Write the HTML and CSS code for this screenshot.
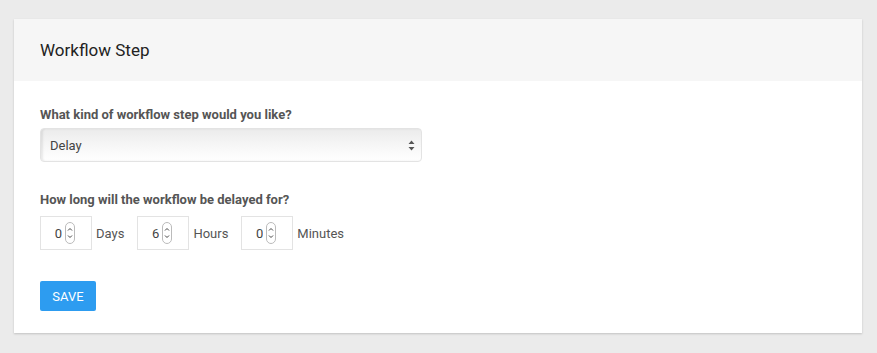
FILE: index.html
```html
<!DOCTYPE html>
<html lang="en">
<head>
    <meta charset="UTF-8">
    <meta name="viewport" content="width=device-width, initial-scale=1.0">
    <title>Workflow Step</title>
    <link rel="stylesheet" href="styles.css">
</head>
<body>

    <div class="card">
        <div class="card-head">
            <h2>Workflow Step</h2>
        </div>
        <form class="card-body">
            <label class="field-label">What kind of workflow step would you like?</label>
            <div class="select-wrap">
                <select name="kind">
                    <option value="delay">Delay</option>
                    <option value="email">Email</option>
                </select>
                <svg class="select-arrows" width="7" height="11" viewBox="0 0 7 11">
                    <path d="M3.5 0.5 L6.5 4 L0.5 4 Z M3.5 10.5 L6.5 7 L0.5 7 Z" fill="#555"/>
                </svg>
            </div>

            <label class="field-label second">How long will the workflow be delayed for?</label>
            <div class="delay-row">
                <div class="num-box">
                    <input type="text" name="days" value="0">
                    <svg class="spin" width="10" height="22" viewBox="0 0 10 22">
                        <rect x="0.5" y="0.5" width="9" height="21" rx="4.5" fill="#fff" stroke="#bbb"/>
                        <path d="M3 8.5 L5 6.5 L7 8.5 M3 13.5 L5 15.5 L7 13.5" fill="none" stroke="#444" stroke-width="1"/>
                    </svg>
                </div>
                <span class="unit">Days</span>
                <div class="num-box">
                    <input type="text" name="hours" value="6">
                    <svg class="spin" width="10" height="22" viewBox="0 0 10 22">
                        <rect x="0.5" y="0.5" width="9" height="21" rx="4.5" fill="#fff" stroke="#bbb"/>
                        <path d="M3 8.5 L5 6.5 L7 8.5 M3 13.5 L5 15.5 L7 13.5" fill="none" stroke="#444" stroke-width="1"/>
                    </svg>
                </div>
                <span class="unit">Hours</span>
                <div class="num-box">
                    <input type="text" name="minutes" value="0">
                    <svg class="spin" width="10" height="22" viewBox="0 0 10 22">
                        <rect x="0.5" y="0.5" width="9" height="21" rx="4.5" fill="#fff" stroke="#bbb"/>
                        <path d="M3 8.5 L5 6.5 L7 8.5 M3 13.5 L5 15.5 L7 13.5" fill="none" stroke="#444" stroke-width="1"/>
                    </svg>
                </div>
                <span class="unit">Minutes</span>
            </div>

            <button type="button" class="save-btn">SAVE</button>
        </form>
    </div>

</body>
</html>
```

FILE: styles.css
```css
body { margin: 0; padding: 19px 15px 19px 14px; background: #ebebeb; font-family: Roboto, "Liberation Sans", sans-serif; }
.card { background: #fff; box-shadow: 0 1px 2px rgba(0,0,0,0.18); }
.card-head { background: #f6f6f6; height: 62px; display: flex; align-items: center; padding: 0 26px; }
.card-head h2 { margin: 0; font-size: 17px; font-weight: 400; color: #222; }
.card-body { padding: 26px 26px 22px; display: flex; flex-direction: column; align-items: flex-start; }
.field-label { font-size: 13px; font-weight: 700; color: #555; line-height: 16px; margin-bottom: 5px; }
.field-label.second { margin-top: 30px; margin-bottom: 8px; }
.select-wrap { position: relative; width: 382px; }
.select-wrap select { -webkit-appearance: none; appearance: none; width: 100%; height: 34px; padding: 0 9px; border: 1px solid #e3e3e3; border-radius: 4px; background: linear-gradient(#ebebeb, #f6f6f6 50%, #fff); box-shadow: inset 2px 0 2px rgba(0,0,0,0.08); font-family: inherit; font-size: 13px; color: #444; outline: none; }
.select-arrows { position: absolute; right: 7px; top: 12px; }
.delay-row { display: flex; align-items: center; }
.num-box { width: 52px; height: 34px; box-sizing: border-box; border: 1px solid #e3e3e3; display: flex; align-items: center; justify-content: flex-end; padding-right: 16px; }
.num-box input { width: 20px; border: 0; padding: 0; margin: 0 3px 0 0; text-align: right; font-family: inherit; font-size: 13px; color: #444; outline: none; background: transparent; }
.spin { display: block; }
.unit { font-size: 13px; color: #555; margin: 0 13px 0 4px; }
.save-btn { margin-top: 31px; width: 56px; height: 30px; border: 0; border-radius: 2px; background: #2d9cf0; color: #fff; font-family: inherit; font-size: 13px; padding: 0; }
```
